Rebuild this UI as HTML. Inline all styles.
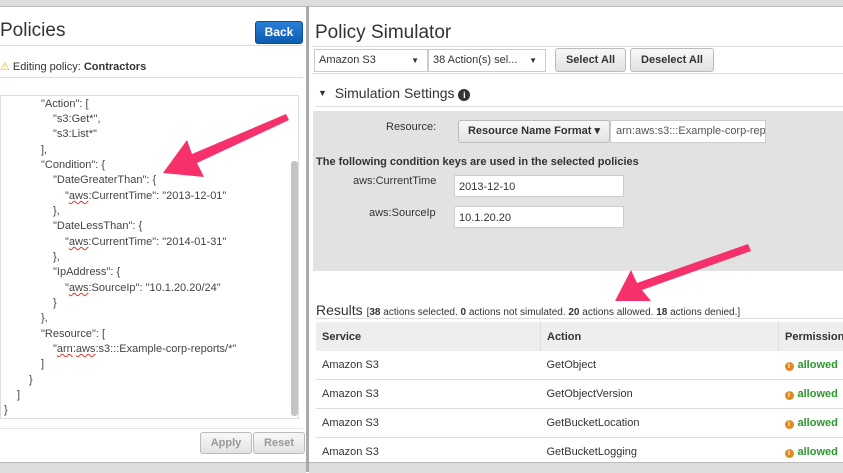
<!DOCTYPE html><html><head><style>
body{margin:0;width:843px;height:472px;overflow:hidden;background:#fff;font-family:"Liberation Sans",sans-serif;color:#333;position:relative}
.a{position:absolute}
.btn{position:absolute;border:1px solid #bbb;border-radius:3px;background:linear-gradient(#f8f8f8,#e2e2e2);font-weight:bold;font-size:11px;text-align:center;color:#333;box-sizing:border-box}
.code{position:absolute;left:0;top:95px;width:299px;height:324px;border:1px solid #ddd;box-sizing:border-box;font-size:11px;color:#444;overflow:hidden}
.code div{position:absolute;white-space:pre}
.sq{text-decoration:underline wavy #d33;text-decoration-thickness:1px}
.inp{position:absolute;background:#fff;border:1px solid #ccc;font-size:11px;box-sizing:border-box;padding:5px 4px;color:#333}
td{font-size:11px;padding:0 6px;height:28px;border-bottom:1px solid #ddd}
th{font-size:11px;text-align:left;padding:0 6px;height:29px;background:#eee;border-right:1px solid #ddd}
.al{color:#2a9a2a;font-weight:bold}
.ic{display:inline-block;width:9px;height:9px;border-radius:50%;background:#e08a1e;color:#fff;font-size:7px;line-height:9px;text-align:center;font-weight:bold;margin-right:4px;vertical-align:0}
</style></head><body>
<div class="a" style="left:0;top:0;width:843px;height:6px;background:#ddd;border-bottom:1px solid #bbb"></div>
<div class="a" style="left:306px;top:6px;width:3px;height:466px;background:#aaa"></div>
<div class="a" style="left:0;top:462px;width:306px;height:10px;background:#ddd;border-top:1px solid #bbb"></div>
<div class="a" style="left:0;top:20px;font-size:19px;color:#333">Policies</div>
<div class="a" style="left:0;top:45px;width:303px;border-top:1px solid #ddd"></div>
<div class="btn" style="left:255px;top:21px;width:48px;height:23px;line-height:21px;background:linear-gradient(#2a7fd6,#0d5cb0);border-color:#0a4c95;color:#fff;font-size:12px">Back</div>
<div class="a" style="left:0;top:60px;font-size:11px"><span style="color:#e8b400">⚠</span> Editing policy: <b>Contractors</b></div>
<div class="a" style="left:0;top:77px;width:303px;border-top:1px solid #ddd"></div>
<div class="code">
<div style="left:40px;top:2px">"Action": [</div>
<div style="left:52px;top:17px">"s3:Get*",</div>
<div style="left:52px;top:32px">"s3:List*"</div>
<div style="left:40px;top:48px">],</div>
<div style="left:40px;top:63px">"Condition": {</div>
<div style="left:52px;top:78px">"DateGreaterThan": {</div>
<div style="left:64px;top:94px">"<span class="sq">aws</span>:CurrentTime": "2013-12-01"</div>
<div style="left:52px;top:109px">},</div>
<div style="left:52px;top:124px">"DateLessThan": {</div>
<div style="left:64px;top:140px">"<span class="sq">aws</span>:CurrentTime": "2014-01-31"</div>
<div style="left:52px;top:155px">},</div>
<div style="left:52px;top:170px">"IpAddress": {</div>
<div style="left:64px;top:186px">"<span class="sq">aws</span>:SourceIp": "10.1.20.20/24"</div>
<div style="left:52px;top:201px">}</div>
<div style="left:40px;top:216px">},</div>
<div style="left:40px;top:232px">"Resource": [</div>
<div style="left:52px;top:247px">"<span class="sq">arn</span>:<span class="sq">aws</span>:s3:::Example-corp-reports/*"</div>
<div style="left:40px;top:262px">]</div>
<div style="left:28px;top:278px">}</div>
<div style="left:16px;top:293px">]</div>
<div style="left:3px;top:308px">}</div>
<div style="left:290px;top:65px;width:7px;height:255px;background:#c4c4c4;border-radius:3px"></div>
</div>
<div class="a" style="left:0;top:428px;width:303px;border-top:1px solid #e5e5e5"></div>
<div class="btn" style="left:200px;top:432px;width:52px;height:22px;line-height:20px;color:#999">Apply</div>
<div class="btn" style="left:253px;top:432px;width:52px;height:22px;line-height:20px;color:#999">Reset</div>

<div class="a" style="left:315px;top:22px;font-size:19px">Policy Simulator</div>
<div class="a" style="left:312px;top:46px;width:531px;border-top:1px solid #ddd"></div>
<div class="inp" style="left:314px;top:49px;width:114px;height:23px;padding:4px">Amazon S3<span style="position:absolute;right:8px;font-size:8px;top:6px">▼</span></div>
<div class="inp" style="left:428px;top:49px;width:118px;height:23px;padding:4px">38 Action(s) sel...<span style="position:absolute;right:8px;font-size:8px;top:6px">▼</span></div>
<div class="btn" style="left:555px;top:48px;width:71px;height:24px;line-height:22px">Select All</div>
<div class="btn" style="left:630px;top:48px;width:84px;height:24px;line-height:22px">Deselect All</div>
<div class="a" style="left:312px;top:73px;width:531px;border-top:1px solid #ddd"></div>
<div class="a" style="left:318px;top:85px;font-size:14px"><span style="font-size:9px;vertical-align:2px">▼</span>&nbsp; Simulation Settings <span style="display:inline-block;width:12px;height:12px;border-radius:50%;background:#333;color:#fff;font-size:9px;line-height:12px;text-align:center;font-weight:bold">i</span></div>
<div class="a" style="left:316px;top:106px;width:527px;border-top:1px solid #ddd"></div>
<div class="a" style="left:313px;top:111px;width:530px;height:160px;background:#e2e2e2"></div>
<div class="a" style="left:386px;top:121px;font-size:11px">Resource:</div>
<div class="btn" style="left:458px;top:120px;width:152px;height:23px;line-height:21px">Resource Name Format ▾</div>
<div class="inp" style="left:610px;top:120px;width:156px;height:23px;padding:4px 5px;overflow:hidden;white-space:nowrap;color:#555">arn:aws:s3:::Example-corp-rep</div>
<div class="a" style="left:316px;top:156px;font-size:11px;font-weight:bold">The following condition keys are used in the selected policies</div>
<div class="a" style="left:353px;top:175px;font-size:11px">aws:CurrentTime</div>
<div class="inp" style="left:454px;top:175px;width:170px;height:22px">2013-12-10</div>
<div class="a" style="left:369px;top:207px;font-size:11px">aws:SourceIp</div>
<div class="inp" style="left:454px;top:206px;width:170px;height:22px">10.1.20.20</div>
<div class="a" style="left:316px;top:302px;font-size:14px;white-space:nowrap">Results <span style="font-size:10px">[<b>38</b> actions selected. <b>0</b> actions not simulated. <b>20</b> actions allowed. <b>18</b> actions denied.]</span></div>
<div class="a" style="left:316px;top:318px;width:527px;border-top:1px solid #ddd"></div>
<table class="a" style="left:316px;top:322px;width:560px;border-collapse:collapse;color:#333">
<tr><th style="width:212px">Service</th><th style="width:225px">Action</th><th>Permission</th></tr>
<tr><td>Amazon S3</td><td>GetObject</td><td><span class="ic">i</span><span class="al">allowed</span></td></tr>
<tr><td>Amazon S3</td><td>GetObjectVersion</td><td><span class="ic">i</span><span class="al">allowed</span></td></tr>
<tr><td>Amazon S3</td><td>GetBucketLocation</td><td><span class="ic">i</span><span class="al">allowed</span></td></tr>
<tr><td>Amazon S3</td><td>GetBucketLogging</td><td><span class="ic">i</span><span class="al">allowed</span></td></tr>
</table>
<div class="a" style="left:309px;top:462px;width:534px;height:10px;background:#ddd;border-top:1px solid #bbb"></div>
<svg class="a" style="left:0;top:0" width="843" height="472">
<polygon points="163,173 187,140 192,154 286,114 289,120 197,163 204,177" fill="#f5306a"/>
<polygon points="615,301 631,270 637,283 748,244 751,251 642,290 651,301" fill="#f5306a"/>
</svg>
</body></html>
